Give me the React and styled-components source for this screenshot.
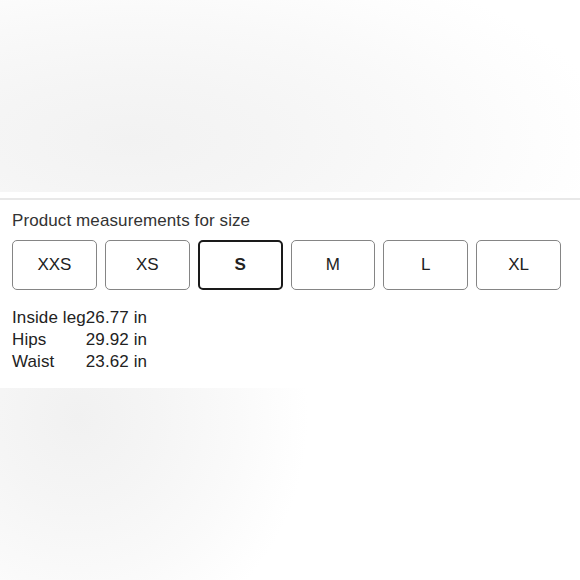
import * as React from "react";
import styled, { createGlobalStyle } from "styled-components";

const GlobalStyle = createGlobalStyle`
  html, body {
    margin: 0;
    padding: 0;
    background: #fff;
    font-family: "Liberation Sans", Arial, sans-serif;
    color: #222;
  }
`;

const Page = styled.div`
  display: flex;
  flex-direction: column;
  width: 580px;
  height: 580px;
  overflow: hidden;
`;

const Backdrop = styled.div`
  height: ${(p) => p.h}px;
  flex: none;
  background: ${(p) => p.bg};
`;

const Divider = styled.div`
  height: 2px;
  flex: none;
  background: #e8e8e8;
  margin-top: 6px;
`;

const Panel = styled.section`
  padding: 11px 12px 15px 12px;
  background: #fff;
`;

const Heading = styled.div`
  font-size: 17px;
  line-height: 20px;
  letter-spacing: 0.1px;
  color: #333;
`;

const SizeRow = styled.div`
  display: grid;
  grid-template-columns: repeat(6, 1fr);
  gap: 8px;
  margin-top: 9px;
  margin-right: 7px;
`;

const SizeButton = styled.button`
  height: 50px;
  box-sizing: border-box;
  border: ${(p) => (p.selected ? "2px solid #1a1a1a" : "1px solid #858585")};
  border-radius: 5px;
  background: #fff;
  font-family: inherit;
  font-size: 17px;
  font-weight: ${(p) => (p.selected ? 700 : 400)};
  color: #222;
  padding: 0;
  cursor: pointer;
`;

const Measurements = styled.table`
  margin-top: 17px;
  border-collapse: collapse;
  font-size: 17px;
  line-height: 22px;
  letter-spacing: 0.1px;
  color: #222;

  td {
    padding: 0;
    vertical-align: top;
  }
`;

const sizes = ["XXS", "XS", "S", "M", "L", "XL"];

const rows = [
  ["Inside leg", "26.77 in"],
  ["Hips", "29.92 in"],
  ["Waist", "23.62 in"]
];

export default function App() {
  const [selected, setSelected] = React.useState("S");
  return (
    <Page>
      <GlobalStyle />
      <Backdrop
        h={192}
        bg="radial-gradient(ellipse 480px 200px at 130px 140px, #f2f2f2 0%, #f5f5f5 30%, #f9f9f9 60%, #fdfdfd 85%, #fff 100%)"
      />
      <Divider />
      <Panel>
        <Heading>Product measurements for size</Heading>
        <SizeRow>
          {sizes.map((s) => (
            <SizeButton
              key={s}
              selected={s === selected}
              onClick={() => setSelected(s)}
            >
              {s}
            </SizeButton>
          ))}
        </SizeRow>
        <Measurements>
          <tbody>
            {rows.map(([label, value]) => (
              <tr key={label}>
                <td>{label}</td>
                <td>{value}</td>
              </tr>
            ))}
          </tbody>
        </Measurements>
      </Panel>
      <Backdrop
        h={200}
        bg="radial-gradient(ellipse 230px 240px at 78px 30px, #f1f1f1 0%, #f5f5f5 35%, #fafafa 70%, #fff 100%)"
      />
    </Page>
  );
}
